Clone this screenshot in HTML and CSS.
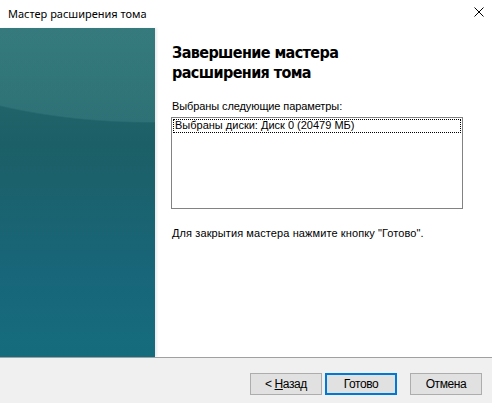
FILE: index.html
```html
<!DOCTYPE html>
<html lang="ru">
<head>
    <meta charset="UTF-8">
    <title>Мастер расширения тома</title>
    <link rel="stylesheet" href="styles.css">
</head>
<body>

<div class="wizard">
    <div class="titlebar">
        <span class="title">Мастер расширения тома</span>
        <svg class="close" width="10" height="10" viewBox="0 0 10 10">
            <path d="M0.5 0.5 L9.5 9.5 M9.5 0.5 L0.5 9.5" stroke="#000" stroke-width="1" fill="none"/>
        </svg>
    </div>

    <div class="main">
        <div class="side"></div>
        <div class="content">
            <h1 class="heading">Завершение мастера<br>расширения тома</h1>
            <p class="label">Выбраны следующие параметры:</p>
            <div class="listbox">
                <div class="item">Выбраны диски: Диск 0 (20479 МБ)</div>
            </div>
            <p class="hint">Для закрытия мастера нажмите кнопку "Готово".</p>
        </div>
    </div>

    <div class="footer">
        <button class="btn back">&lt; <u>Н</u>азад</button>
        <button class="btn default">Готово</button>
        <button class="btn cancel">Отмена</button>
    </div>
</div>

</body>
</html>
```

FILE: styles.css
```css
body {
    margin: 0;
    background-color: #ffffff;
    font-family: "Liberation Sans", Arial, sans-serif;
}
.wizard {
    width: 492px;
    height: 403px;
    display: flex;
    flex-direction: column;
    overflow: hidden;
}
.titlebar {
    height: 28px;
    display: flex;
    align-items: center;
    justify-content: space-between;
    padding: 0 8px 0 8px;
    flex-shrink: 0;
}
.title {
    font-family: "Noto Sans", "Open Sans", sans-serif;
    font-size: 11px;
    color: #000;
    margin-top: -2px;
}
.close {
    margin-top: -4px;
}
.main {
    display: flex;
    height: 329px;
    flex-shrink: 0;
}
.side {
    width: 155px;
    flex-shrink: 0;
    background:
        radial-gradient(ellipse 330px 150px at 150px -55px, rgba(80, 150, 150, 0.3) 0, rgba(80, 150, 150, 0.3) 99%, rgba(80, 150, 150, 0) 100%),
        linear-gradient(180deg, #2a6e72 0%, #1c5f66 35%, #18667a 75%, #156c7c 100%);
    box-shadow: 2px 0 2px rgba(0, 0, 0, 0.08);
}
.content {
    padding: 15px 0 0 17px;
    flex: 1;
}
.heading {
    font-family: "DejaVu Sans Condensed", "DejaVu Sans", Verdana, sans-serif;
    font-stretch: condensed;
    font-weight: bold;
    font-size: 16px;
    letter-spacing: -0.6px;
    line-height: 20px;
    margin: 0 0 17px 0;
    color: #000;
}
.label {
    font-size: 11px;
    letter-spacing: -0.1px;
    margin: 0 0 5px 0;
    color: #000;
}
.listbox {
    width: 288px;
    height: 88px;
    border: 1px solid #828282;
    margin-left: -1px;
    padding: 1px;
}
.item {
    font-size: 11px;
    line-height: 11px;
    padding: 0 0 1px 1px;
    border: 1px dotted #000;
    color: #000;
}
.hint {
    font-size: 11px;
    letter-spacing: 0.1px;
    margin: 18px 0 0 0;
    color: #000;
}
.footer {
    flex: 1;
    background-color: #f0f0f0;
    border-top: 1px solid #a0a0a0;
    display: flex;
    align-items: flex-start;
    padding: 15px 0 0 250px;
}
.btn {
    width: 72px;
    height: 22px;
    font-family: "Liberation Sans", Arial, sans-serif;
    font-size: 12px;
    letter-spacing: -0.4px;
    background-color: #e1e1e1;
    border: 1px solid #adadad;
    padding: 0;
    color: #000;
}
.btn.default {
    margin-left: 3px;
    border: 2px solid #0078d7;
}
.btn.cancel {
    margin-left: 13px;
}
```
